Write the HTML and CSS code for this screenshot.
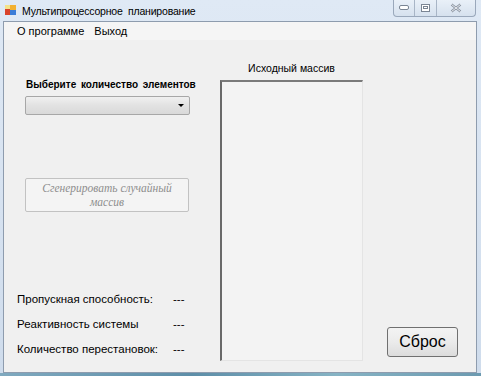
FILE: index.html
```html
<!DOCTYPE html>
<html lang="ru">
<head>
    <meta charset="UTF-8">
    <title>Мультипроцессорное планирование</title>
    <link rel="stylesheet" href="styles.css">
</head>
<body>
    <div class="window">
        <div class="titlebar">
            <svg class="app-icon" width="11" height="11" viewBox="0 0 11 11">
                <rect x="0" y="4" width="5" height="6" fill="#d9432b"/>
                <rect x="5" y="0" width="6" height="5" fill="#f2b132"/>
                <rect x="5" y="5" width="6" height="5" fill="#3b7dd8"/>
                <rect x="0" y="0" width="5" height="4" fill="#f4e28a"/>
            </svg>
            <span class="title">Мультипроцессорное&nbsp; планирование</span>
            <div class="caption">
                <div class="cap-btn cap-min">
                    <svg width="10" height="6" viewBox="0 0 10 6"><rect x="0.5" y="0.5" width="9" height="4" rx="1.5" fill="#fff" stroke="#7a8594"/></svg>
                </div>
                <div class="cap-btn cap-max">
                    <svg width="9" height="8" viewBox="0 0 9 8"><rect x="0.5" y="0.5" width="8" height="7" fill="#fff" stroke="#7a8594"/><rect x="2.5" y="2.5" width="4" height="2" fill="none" stroke="#7a8594"/></svg>
                </div>
                <div class="cap-btn cap-close">
                    <svg width="12" height="10" viewBox="0 0 12 10"><path d="M1.5 1.5 L10.5 8.5 M10.5 1.5 L1.5 8.5" stroke="#8a94a2" stroke-width="2.4"/><path d="M1.5 1.5 L10.5 8.5 M10.5 1.5 L1.5 8.5" stroke="#fff" stroke-width="0.8"/></svg>
                </div>
            </div>
        </div>

        <div class="client">
            <div class="menu">
                <span class="menu-item">О программе</span>
                <span class="menu-item">Выход</span>
            </div>

            <div class="content">
                <div class="left">
                    <div class="choose">
                        <div class="choose-label">Выберите количество элементов</div>
                        <div class="combo"><span class="combo-arrow"></span></div>
                        <div class="gen-btn">Сгенерировать случайный<br>массив</div>
                    </div>
                    <div class="stats">
                        <div class="stat"><span class="stat-name">Пропускная способность:</span><span>---</span></div>
                        <div class="stat"><span class="stat-name">Реактивность системы</span><span>---</span></div>
                        <div class="stat"><span class="stat-name">Количество перестановок:</span><span>---</span></div>
                    </div>
                </div>

                <div class="center">
                    <div class="list-label">Исходный массив</div>
                    <div class="listbox"></div>
                </div>

                <div class="right">
                    <div class="reset-btn">Сброс</div>
                </div>
            </div>
        </div>
        <div class="desktop"></div>
    </div>
</body>
</html>
```

FILE: styles.css
```css
body {
    margin: 0;
    font-family: "Liberation Sans", Arial, sans-serif;
    font-size: 11px;
    color: #000;
}
.window {
    width: 481px;
    height: 376px;
    background: linear-gradient(#dfe9f5, #cfdcec);
    display: flex;
    flex-direction: column;
    overflow: hidden;
}
.titlebar {
    height: 21px;
    display: flex;
    align-items: center;
    padding-left: 5px;
}
.app-icon { margin-right: 6px; }
.title {
    font-size: 10.5px;
    letter-spacing: -0.2px;
}
.caption {
    margin-left: auto;
    margin-right: 5px;
    align-self: flex-start;
    display: flex;
    height: 16px;
    border: 1px solid #9aa8bb;
    border-top: none;
    border-radius: 0 0 4px 4px;
    background: linear-gradient(#e9f0f8, #d6e1ee);
}
.cap-btn {
    display: flex;
    align-items: center;
    justify-content: center;
}
.cap-min { width: 20px; border-right: 1px solid #a8b5c6; }
.cap-max { width: 21px; border-right: 1px solid #a8b5c6; }
.cap-close { width: 38px; }
.client {
    margin: 0 4px 0 3px;
    height: 350px;
    background: #f0f0f0;
    border: 1px solid #8e9cae;
    display: flex;
    flex-direction: column;
}
.menu {
    height: 18px;
    display: flex;
    align-items: center;
    padding-left: 13px;
    background: #f5f5f5;
}
.menu-item {
    margin-right: 10px;
    font-size: 11px;
}
.content {
    flex: 1;
    display: flex;
}
.left {
    width: 203px;
    padding-left: 13px;
    display: flex;
    flex-direction: column;
}
.choose { padding-left: 8px; }
.choose-label {
    margin-top: 38px;
    height: 14px;
    line-height: 14px;
    font-weight: bold;
    font-size: 10px;
    word-spacing: 2px;
    white-space: nowrap;
    padding-left: 1px;
}
.combo {
    margin-top: 4px;
    width: 163px;
    height: 17px;
    border: 1px solid #a7a7a7;
    border-radius: 2px;
    background: linear-gradient(#f0f0f0, #e2e2e2 50%, #d9d9d9);
    position: relative;
}
.combo-arrow {
    position: absolute;
    right: 5px;
    top: 7px;
    border-left: 3px solid transparent;
    border-right: 3px solid transparent;
    border-top: 3px solid #000;
}
.gen-btn {
    margin-top: 63px;
    width: 162px;
    height: 32px;
    border: 1px solid #c2c2c2;
    border-radius: 2px;
    background: #f4f4f4;
    display: flex;
    align-items: center;
    justify-content: center;
    text-align: center;
    font-family: "Liberation Serif", serif;
    font-style: italic;
    font-size: 11.5px;
    line-height: 14px;
    color: #8e8e8e;
}
.stats {
    margin-top: auto;
    padding-bottom: 11px;
}
.stat {
    height: 25px;
    display: flex;
    align-items: center;
    font-size: 11.5px;
}
.stat-name { width: 156px; }
.center {
    width: 143px;
    display: flex;
    flex-direction: column;
}
.list-label {
    margin-top: 21px;
    height: 14px;
    line-height: 14px;
    text-align: center;
    font-size: 10.5px;
}
.listbox {
    margin-top: 5px;
    height: 278px;
    border-left: 2px solid #696969;
    border-top: 2px solid #7a7a7a;
    border-right: 1px solid #e4e4e4;
    border-bottom: 1px solid #e4e4e4;
    background: #f3f3f3;
}
.right {
    flex: 1;
    display: flex;
    align-items: flex-end;
    justify-content: flex-end;
    padding: 0 18px 15px 0;
}
.reset-btn {
    width: 69px;
    height: 28px;
    border: 1px solid #707070;
    border-radius: 3px;
    background: linear-gradient(#f3f3f3, #ebebeb 50%, #dcdcdc);
    display: flex;
    align-items: center;
    justify-content: center;
    font-size: 16px;
}
.desktop {
    flex: 1;
    background: linear-gradient(90deg, #7fa9bf, #5d8ea8 40%, #86b3c4 70%, #6c9ab0);
}
```
